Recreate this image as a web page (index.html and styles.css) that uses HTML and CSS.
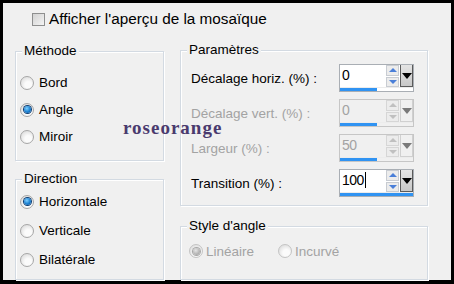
FILE: index.html
```html
<!DOCTYPE html>
<html lang="fr">
<head>
  <meta charset="UTF-8" />
  <title>Mosaïque</title>
  <link rel="stylesheet" href="styles.css">
</head>
<body>
  <div class="window">
    <div class="check-row">
      <span class="checkbox"></span>
      <span>Afficher l'aperçu de la mosaïque</span>
    </div>

    <div class="columns">
      <div class="col-left">
        <div class="group group-method">
          <div class="group-title">Méthode</div>
          <div class="group-body">
            <div class="radio-row"><span class="radio"></span>Bord</div>
            <div class="radio-row"><span class="radio checked"></span>Angle</div>
            <div class="radio-row"><span class="radio"></span>Miroir</div>
          </div>
        </div>

        <div class="group group-direction">
          <div class="group-title">Direction</div>
          <div class="group-body">
            <div class="radio-row"><span class="radio checked"></span>Horizontale</div>
            <div class="radio-row"><span class="radio"></span>Verticale</div>
            <div class="radio-row"><span class="radio"></span>Bilatérale</div>
          </div>
        </div>
      </div>

      <div class="col-right">
        <div class="group group-params">
          <div class="group-title">Paramètres</div>
          <div class="group-body">
            <div class="param-row">
              <span class="param-label">Décalage horiz. (%) :</span>
              <div class="spin">
                <div class="spin-top">
                  <span class="spin-value">0</span>
                  <span class="spin-arrows"><span class="arrow-up"></span><span class="arrow-down"></span></span>
                  <span class="spin-drop"></span>
                </div>
                <div class="spin-track"><div class="spin-fill" style="width: 51%"></div></div>
              </div>
            </div>

            <div class="param-row disabled">
              <span class="param-label">Décalage vert. (%) :</span>
              <div class="spin">
                <div class="spin-top">
                  <span class="spin-value">0</span>
                  <span class="spin-arrows"><span class="arrow-up"></span><span class="arrow-down"></span></span>
                  <span class="spin-drop"></span>
                </div>
                <div class="spin-track"><div class="spin-fill" style="width: 51%"></div></div>
              </div>
            </div>

            <div class="param-row disabled">
              <span class="param-label">Largeur (%) :</span>
              <div class="spin">
                <div class="spin-top">
                  <span class="spin-value">50</span>
                  <span class="spin-arrows"><span class="arrow-up"></span><span class="arrow-down"></span></span>
                  <span class="spin-drop"></span>
                </div>
                <div class="spin-track"><div class="spin-fill" style="width: 51%"></div></div>
              </div>
            </div>

            <div class="param-row">
              <span class="param-label">Transition (%) :</span>
              <div class="spin">
                <div class="spin-top">
                  <span class="spin-value">100<span class="caret"></span></span>
                  <span class="spin-arrows"><span class="arrow-up"></span><span class="arrow-down"></span></span>
                  <span class="spin-drop"></span>
                </div>
                <div class="spin-track"><div class="spin-fill" style="width: 100%"></div></div>
              </div>
            </div>
          </div>
        </div>

        <div class="group group-style">
          <div class="group-title">Style d'angle</div>
          <div class="group-body style-row">
            <div class="radio-row disabled"><span class="radio checked"></span>Linéaire</div>
            <div class="radio-row disabled"><span class="radio"></span>Incurvé</div>
          </div>
        </div>
      </div>
    </div>

    <div class="watermark">roseorange</div>
  </div>
</body>
</html>
```

FILE: styles.css
```css
* {
  margin: 0;
  padding: 0;
  box-sizing: border-box;
}

body {
  font-family: "Liberation Sans", Arial, sans-serif;
  font-size: 13.5px;
  color: #000;
  background-color: #000;
}

.window {
  position: relative;
  width: 454px;
  height: 284px;
  border: 3px solid #000;
  border-bottom-width: 4px;
  background-color: #f0f0f0;
}

.check-row {
  display: flex;
  align-items: center;
  gap: 4px;
  height: 16px;
  margin-top: 8px;
  padding-left: 29px;
  font-size: 15.3px;
}

.checkbox {
  width: 13px;
  height: 13px;
  border: 1px solid #8e8f8f;
  background: linear-gradient(135deg, #d2d2d2, #f4f4f4);
}

.columns {
  display: flex;
  gap: 16px;
  margin-top: 23px;
  margin-left: 12px;
}

.col-left {
  display: flex;
  flex-direction: column;
  gap: 18px;
  width: 149px;
  padding-top: 1px;
}

.col-right {
  display: flex;
  flex-direction: column;
  gap: 20px;
  width: 248px;
}

/* group box with etched border and title sitting on the top line */
.group {
  border: 1px solid #d3dae2;
  box-shadow: inset 1px 1px 0 #fff, 1px 1px 0 #fff;
}

.group-title {
  width: fit-content;
  margin: -9px 0 0 6px;
  padding: 0 2px;
  line-height: 16px;
  background-color: #f0f0f0;
}

.group-method {
  height: 110px;
  padding-left: 4px;
}

.group-method .group-body {
  padding-top: 10px;
}

.group-direction {
  height: 101px;
  padding-left: 4px;
}

.group-params {
  height: 156px;
  padding: 0 13px 0 10px;
}

.group-params .group-title {
  margin-left: -4px;
}

.group-params .group-body {
  display: flex;
  flex-direction: column;
  gap: 7px;
  padding-top: 6px;
}

.group-style {
  height: 54px;
  padding-left: 8px;
}

.group-style .group-title {
  margin-left: -2px;
}

.group-method .group-title,
.group-direction .group-title {
  margin-left: 2px;
}

.radio-row {
  display: flex;
  align-items: center;
  gap: 5px;
  height: 27px;
}

.group-direction .radio-row {
  height: 29px;
}

.radio {
  width: 14px;
  height: 14px;
  border-radius: 50%;
  border: 1px solid #a7a7a7;
  background: radial-gradient(circle at 60% 65%, #fbfbfb 30%, #d8d8d8 90%);
  display: flex;
  align-items: center;
  justify-content: center;
}

.radio.checked::after {
  content: "";
  width: 7px;
  height: 7px;
  border-radius: 50%;
  background: radial-gradient(circle at 40% 35%, #7fd0ff 0%, #1a7fd0 55%, #0b4f95 100%);
  box-shadow: 0 0 0 1px #0d3d72;
}

.disabled {
  color: #a3a3a3;
}

.radio-row.disabled .radio {
  border-color: #c4c4c4;
}

.radio-row.disabled .radio.checked::after {
  background: radial-gradient(circle at 40% 35%, #e6e6e6 0%, #b4b4b4 60%, #9a9a9a 100%);
  box-shadow: 0 0 0 1px #a8a8a8;
}

.style-row {
  display: flex;
  gap: 24px;
  padding-top: 3px;
}

.style-row .radio-row {
  height: 28px;
  gap: 3px;
}

.param-row {
  display: flex;
  justify-content: space-between;
  align-items: center;
  height: 28px;
}

.spin {
  width: 75px;
  height: 28px;
  border: 1px solid #a9aeb4;
  background-color: #fff;
  display: flex;
  flex-direction: column;
}

.spin-top {
  display: flex;
  height: 23px;
}

.spin-value {
  flex: 1;
  padding: 1px 0 0 2px;
  font-size: 14px;
  line-height: 18px;
  letter-spacing: -0.5px;
}

.caret {
  display: inline-block;
  width: 1px;
  height: 16px;
  margin-left: 1px;
  background-color: #000;
  vertical-align: -3px;
}

.spin-arrows {
  width: 13px;
  display: flex;
  flex-direction: column;
  gap: 1px;
  margin-right: 1px;
}

.arrow-up,
.arrow-down {
  flex: 1;
  background-color: #ececec;
  border: 1px solid #c8ccd2;
  display: flex;
  align-items: center;
  justify-content: center;
}

.arrow-up::after {
  content: "";
  border-left: 4px solid transparent;
  border-right: 4px solid transparent;
  border-bottom: 4px solid #4a7fd8;
}

.arrow-down::after {
  content: "";
  border-left: 4px solid transparent;
  border-right: 4px solid transparent;
  border-top: 4px solid #4a7fd8;
}

.spin-drop {
  width: 13px;
  background: linear-gradient(#e4e4e4, #c8c8c8);
  border: 1px solid #5b5b5b;
  border-top: none;
  display: flex;
  justify-content: center;
  padding-top: 8px;
}

.spin-drop::after {
  content: "";
  height: 0;
  border-left: 5px solid transparent;
  border-right: 5px solid transparent;
  border-top: 6px solid #000;
}

.spin-track {
  height: 4px;
  background-color: #fff;
  border-top: 1px solid #ececec;
}

.spin-fill {
  height: 3px;
  background-color: #3093f2;
}

.disabled .spin {
  background-color: #f0f0f0;
  border-color: #c6c6c6;
}

.disabled .spin-track {
  background-color: #f0f0f0;
}

.disabled .arrow-up,
.disabled .arrow-down {
  border-color: #d6d6d6;
}

.disabled .arrow-up::after {
  border-bottom-color: #c0c0c0;
}

.disabled .arrow-down::after {
  border-top-color: #c0c0c0;
}

.disabled .spin-drop {
  background: #f0f0f0;
  border-color: #d0d0d0;
}

.disabled .spin-drop::after {
  border-top-color: #7a7a7a;
}

.watermark {
  position: absolute;
  left: 120px;
  top: 114px;
  font-family: "Liberation Serif", "Times New Roman", serif;
  font-weight: bold;
  font-size: 19px;
  letter-spacing: 1px;
  color: #4a3a6e;
}
```
